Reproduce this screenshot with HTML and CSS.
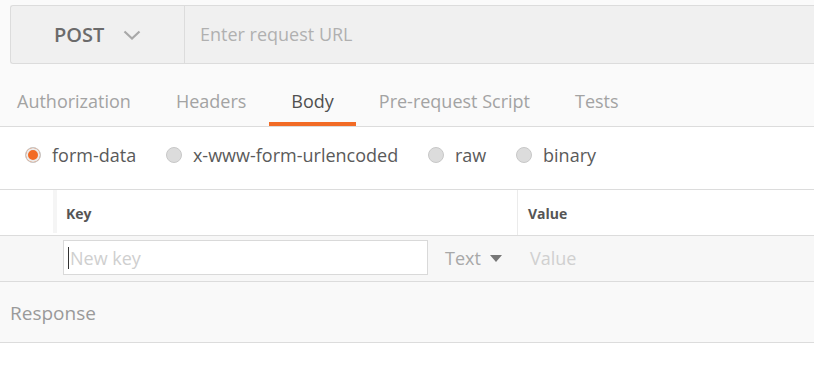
FILE: index.html
```html
<!DOCTYPE html>
<html>
<head>
<meta charset="utf-8">
<link rel="stylesheet" href="styles.css">
</head>
<body>
<div class="top">
  <div class="url-bar">
    <div class="method">
      <span class="method-name">POST</span>
      <svg class="chev" width="18" height="10" viewBox="0 0 18 10"><path d="M1.5 1.5 L9 8.5 L16.5 1.5" fill="none" stroke="#a8a8a8" stroke-width="2.2"/></svg>
    </div>
    <div class="url">Enter request URL</div>
  </div>
  <div class="tabs">
    <div class="tab first">Authorization</div>
    <div class="tab">Headers</div>
    <div class="tab active">Body</div>
    <div class="tab">Pre-request Script</div>
    <div class="tab">Tests</div>
  </div>
</div>
<div class="modes">
  <label class="mode"><span class="radio checked"></span>form-data</label>
  <label class="mode"><span class="radio"></span>x-www-form-urlencoded</label>
  <label class="mode"><span class="radio"></span>raw</label>
  <label class="mode"><span class="radio"></span>binary</label>
</div>
<div class="kv-head">
  <div class="kv-handle"></div>
  <div class="kv-key">Key</div>
  <div class="kv-value">Value</div>
</div>
<div class="kv-row">
  <div class="kv-row-handle"></div>
  <div class="kv-row-key"><div class="key-input"><span class="caret"></span>New key</div></div>
  <div class="kv-type">Text <span class="tri"></span></div>
  <div class="kv-row-value">Value</div>
</div>
<div class="response">Response</div>
</body>
</html>
```
FILE: styles.css
```css
* { box-sizing: border-box; }
html, body { margin: 0; height: 100%; }
body {
  background: #fff;
  font-family: "Open Sans", "Noto Sans", sans-serif;
  color: #555;
  overflow: hidden;
}
.top {
  background: #fafafa;
  padding-top: 5px;
  border-bottom: 1px solid #dcdcdc;
}
.url-bar {
  margin-left: 10px;
  height: 59px;
  display: flex;
  background: #f0f0f0;
  border: 1px solid #dcdcdc;
  border-right: none;
  border-radius: 3px 0 0 3px;
}
.method {
  width: 174px;
  border-right: 1px solid #dcdcdc;
  display: flex;
  align-items: center;
  padding-left: 43px;
}
.method-name {
  font-size: 20px;
  font-weight: 600;
  color: #6b6b6b;
}
.chev { margin-left: 19px; margin-top: 1px; }
.url {
  display: flex;
  align-items: center;
  padding-left: 15px;
  padding-bottom: 1px;
  font-size: 18px;
  color: #b0b0b0;
}
.tabs {
  display: flex;
  height: 62px;
}
.tab {
  padding: 25px 22.5px 0;
  font-size: 18px;
  color: #a3a3a3;
  height: 62px;
  border-bottom: 4px solid transparent;
}
.tab.first { padding-left: 17px; }
.tab.active {
  color: #505050;
  border-bottom-color: #f26b25;
}
.modes {
  display: flex;
  height: 63px;
  align-items: flex-start;
  padding-top: 16px;
  background: #fff;
  border-bottom: 1px solid #dcdcdc;
  padding-left: 25px;
}
.mode {
  display: flex;
  align-items: center;
  font-size: 18px;
  color: #5a5a5a;
  margin-right: 29.8px;
}
.radio {
  width: 16px;
  height: 16px;
  border-radius: 50%;
  background: #dcdcdc;
  border: 1px solid #c8c8c8;
  margin-right: 11px;
}
.radio.checked {
  background: #f26b25;
  box-shadow: inset 0 0 0 2px #ececec;
}
.kv-head {
  display: flex;
  height: 46px;
  border-bottom: 1px solid #dcdcdc;
  background: #fff;
}
.kv-handle {
  width: 57px;
  border-right: 4px solid #f5f5f5;
  margin-bottom: 2px;
}
.kv-key {
  width: 461px;
  display: flex;
  align-items: center;
  padding-left: 9px;
  padding-top: 2px;
  font-size: 14px;
  font-weight: 700;
  color: #555;
  border-right: 1px solid #ebebeb;
}
.kv-value {
  display: flex;
  align-items: center;
  padding-left: 10px;
  padding-top: 2px;
  font-size: 14px;
  font-weight: 700;
  color: #555;
}
.kv-row {
  display: flex;
  height: 46px;
  border-bottom: 1px solid #dcdcdc;
  background: #f7f7f7;
  align-items: flex-start;
  padding-top: 4px;
}
.kv-row > div { height: 35px; display: flex; align-items: center; }
.kv-row-handle { width: 63px; }
.kv-row-key { width: 365px; }
.kv-row-key .key-input { width: 100%; }
.key-input {
  height: 35px;
  background: #fff;
  border: 1px solid #d9d9d9;
  display: flex;
  align-items: center;
  font-size: 18px;
  color: #cfcfcf;
  padding-left: 4px;
}
.caret {
  width: 1px;
  height: 22px;
  background: #333;
  margin-right: 1px;
}
.kv-type {
  margin-left: 17px;
  font-size: 18px;
  color: #a8a8a8;
  width: 85px;
}
.tri {
  width: 0;
  height: 0;
  border-left: 6px solid transparent;
  border-right: 6px solid transparent;
  border-top: 7px solid #777;
  margin-left: 9px;
  margin-top: 2px;
}
.kv-row-value {
  font-size: 18px;
  color: #d0d0d0;
}
.response {
  height: 61px;
  background: #f9f9f9;
  border-bottom: 1px solid #dcdcdc;
  display: flex;
  align-items: center;
  padding-left: 10px;
  padding-top: 1px;
  font-size: 19px;
  color: #9a9a9a;
}
```
